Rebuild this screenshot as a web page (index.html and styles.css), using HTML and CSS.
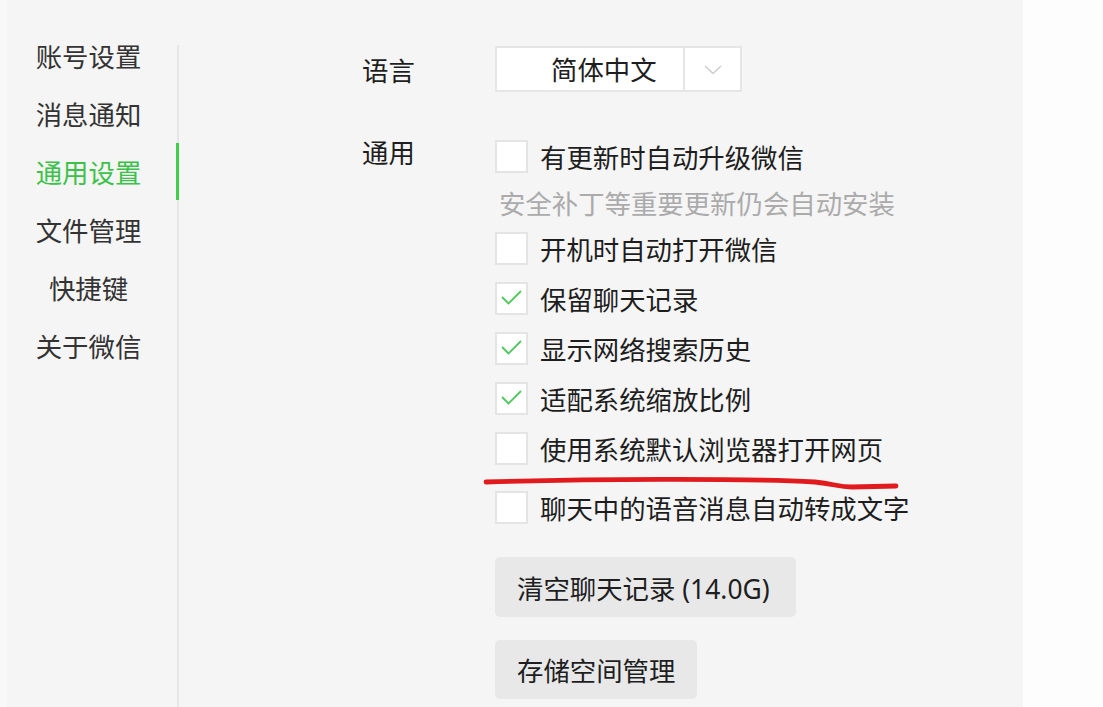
FILE: index.html
```html
<!DOCTYPE html>
<html lang="zh-CN">
<head>
  <meta charset="UTF-8">
  <meta name="viewport" content="width=device-width, initial-scale=1.0">
  <title>设置</title>
  <link rel="stylesheet" href="styles.css">
</head>
<body>
  <div class="window">
    <aside class="sidebar">
      <nav class="nav">
        <a class="nav-item">账号设置</a>
        <a class="nav-item">消息通知</a>
        <a class="nav-item active">通用设置</a>
        <a class="nav-item">文件管理</a>
        <a class="nav-item">快捷键</a>
        <a class="nav-item">关于微信</a>
      </nav>
      <div class="divider"></div>
    </aside>

    <main class="content">
      <div class="row row-lang">
        <div class="label">语言</div>
        <div class="select">
          <span class="select-value">简体中文</span>
          <span class="select-arrow">
            <svg width="18" height="10" viewBox="0 0 18 10"><polyline points="1,1 9,8.5 17,1" fill="none" stroke="#cdcdcd" stroke-width="1.5"/></svg>
          </span>
        </div>
      </div>

      <div class="row row-general">
        <div class="label label-top">通用</div>
        <div class="options">
          <label class="option"><span class="check"></span>有更新时自动升级微信</label>
          <p class="hint">安全补丁等重要更新仍会自动安装</p>
          <label class="option after-hint"><span class="check"></span>开机时自动打开微信</label>
          <label class="option"><span class="check on"><svg width="33" height="33" viewBox="0 0 33 33"><polyline points="7,15 13.5,21.5 26,9" fill="none" stroke="#4cc95a" stroke-width="1.8"/></svg></span>保留聊天记录</label>
          <label class="option"><span class="check on"><svg width="33" height="33" viewBox="0 0 33 33"><polyline points="7,15 13.5,21.5 26,9" fill="none" stroke="#4cc95a" stroke-width="1.8"/></svg></span>显示网络搜索历史</label>
          <label class="option"><span class="check on"><svg width="33" height="33" viewBox="0 0 33 33"><polyline points="7,15 13.5,21.5 26,9" fill="none" stroke="#4cc95a" stroke-width="1.8"/></svg></span>适配系统缩放比例</label>
          <label class="option"><span class="check"></span>使用系统默认浏览器打开网页</label>
          <label class="option option-spaced"><span class="check"></span>聊天中的语音消息自动转成文字</label>

          <button class="btn btn-first">清空聊天记录 (14.0G)</button>
          <button class="btn btn-second">存储空间管理</button>
        </div>
      </div>
    </main>

    <!-- red hand-drawn underline -->
    <svg class="mark" width="430" height="26" viewBox="0 0 430 26">
      <path d="M6 12 C 110 9, 260 8, 335 12 C 355 14, 358 17, 372 17 L 416 16" fill="none" stroke="#e01a1d" stroke-width="4.8" stroke-linecap="round"/>
    </svg>
  </div>
</body>
</html>
```

FILE: styles.css
```css
body {
  margin: 0;
  background: #fdfdfd;
  font-family: "Noto Sans", "Noto Sans CJK SC", sans-serif;
  font-size: 26.4px;
  color: #1e1e1e;
}
.window {
  position: relative;
  display: flex;
  width: 1023px;
  height: 707px;
  background: linear-gradient(to right, #f8f8f8 0 7px, #f5f5f5 7px);
  overflow: hidden;
}

/* sidebar */
.sidebar {
  display: flex;
  width: 179px;
  flex-shrink: 0;
}
.nav {
  width: 177px;
  padding-top: 27px;
  display: flex;
  flex-direction: column;
}
.nav-item {
  position: relative;
  height: 58px;
  line-height: 58px;
  text-align: center;
  color: #333;
  font-family: "Noto Sans CJK SC", sans-serif;
}
.nav-item.active {
  color: #3cc24a;
}
.nav-item.active::after {
  content: "";
  position: absolute;
  top: 0;
  right: -2px;
  width: 3px;
  height: 57px;
  background: #3fcf4c;
}
.divider {
  width: 2px;
  margin-top: 45px;
  background: #e6e6e6;
}

/* content */
.content {
  flex: 1;
  padding: 46px 0 0 183px;
}
.row {
  display: flex;
}
.label {
  width: 133px;
  flex-shrink: 0;
  font-family: "Noto Sans CJK SC", sans-serif;
}
.row-lang {
  height: 46px;
  align-items: center;
}
.row-general {
  margin-top: 48px;
  align-items: flex-start;
}
.label-top {
  line-height: 26px;
  margin-top: -1px;
}

.select {
  display: flex;
  width: 247px;
  height: 46px;
  box-sizing: border-box;
  border: 2px solid #e6e6e6;
  background: #fff;
}
.select-value {
  width: 188px;
  box-sizing: border-box;
  padding-left: 54px;
  line-height: 42px;
  font-family: "Noto Sans CJK SC", sans-serif;
  border-right: 2px solid #e6e6e6;
}
.select-arrow {
  flex: 1;
  display: flex;
  align-items: center;
  justify-content: center;
  padding-top: 2px;
}

.options {
  display: flex;
  flex-direction: column;
  align-items: flex-start;
}
.option {
  display: flex;
  align-items: center;
  gap: 12px;
  height: 33px;
  margin-top: 17px;
  font-family: "Noto Sans CJK SC", sans-serif;
}
.option:first-child {
  margin-top: 0;
}
.option.after-hint {
  margin-top: 16px;
}
.option.option-spaced {
  margin-top: 26px;
}
.check {
  width: 33px;
  height: 33px;
  box-sizing: border-box;
  border: 2px solid #e4e4e4;
  background: #fff;
  position: relative;
}
.check svg {
  position: absolute;
  left: -2px;
  top: -2px;
}
.hint {
  margin: 17px 0 0;
  padding-left: 4px;
  line-height: 26px;
  color: #ababab;
  font-family: "Noto Sans CJK SC", sans-serif;
}

.btn {
  font: inherit;
  color: #1e1e1e;
  background: #e8e8e8;
  border: none;
  border-radius: 5px;
  padding: 0 22px;
  cursor: pointer;
}
.btn-first {
  height: 60px;
  margin-top: 33px;
  padding-right: 26px;
}
.btn-second {
  height: 59px;
  margin-top: 23px;
  font-family: "Noto Sans CJK SC", sans-serif;
}

.mark {
  position: absolute;
  left: 480px;
  top: 470px;
}
```
